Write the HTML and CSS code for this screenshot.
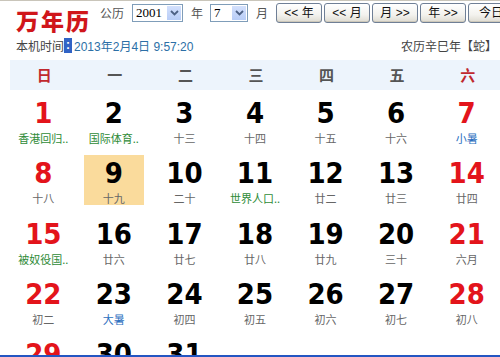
FILE: index.html
```html
<!DOCTYPE html>
<html lang="zh">
<head>
<meta charset="utf-8">
<title>万年历</title>
<link rel="stylesheet" href="styles.css">
</head>
<body>
<div class="page">
  <div class="top">
    <div class="title">万年历</div>
    <div class="controls">
      <span class="lbl lbl-gl">公历</span>
      <span class="sel sel-year"><span class="sel-val">2001</span><span class="sel-btn"><svg width="9" height="6" viewBox="0 0 9 6"><path d="M1 1 L4.5 4.5 L8 1" fill="none" stroke="#4d6185" stroke-width="1.8"/></svg></span></span>
      <span class="lbl lbl-y">年</span>
      <span class="sel sel-month"><span class="sel-val">7</span><span class="sel-btn"><svg width="9" height="6" viewBox="0 0 9 6"><path d="M1 1 L4.5 4.5 L8 1" fill="none" stroke="#4d6185" stroke-width="1.8"/></svg></span></span>
      <span class="lbl lbl-m">月</span>
      <div class="btns">
        <button class="btn">&lt;&lt; 年</button>
        <button class="btn">&lt;&lt; 月</button>
        <button class="btn">月 &gt;&gt;</button>
        <button class="btn">年 &gt;&gt;</button>
        <button class="btn">今日</button>
      </div>
    </div>
  </div>
  <div class="info">
    <div class="now"><span class="now-lbl">本机时间</span><span class="colon">:</span><span class="now-val">2013年2月4日 9:57:20</span></div>
    <div class="lunar-year">农历辛巳年【蛇】</div>
  </div>
  <div class="cal">
    <div class="weekdays">
      <div class="wd red">日</div><div class="wd">一</div><div class="wd">二</div><div class="wd">三</div><div class="wd">四</div><div class="wd">五</div><div class="wd red">六</div>
    </div>
    <div class="days">
      <div class="cell"><div class="box"><div class="num red">1</div><div class="lun fest">香港回归..</div></div></div>
      <div class="cell"><div class="box"><div class="num">2</div><div class="lun fest">国际体育..</div></div></div>
      <div class="cell"><div class="box"><div class="num">3</div><div class="lun">十三</div></div></div>
      <div class="cell"><div class="box"><div class="num">4</div><div class="lun">十四</div></div></div>
      <div class="cell"><div class="box"><div class="num">5</div><div class="lun">十五</div></div></div>
      <div class="cell"><div class="box"><div class="num">6</div><div class="lun">十六</div></div></div>
      <div class="cell"><div class="box"><div class="num red">7</div><div class="lun term">小暑</div></div></div>

      <div class="cell"><div class="box"><div class="num red">8</div><div class="lun">十八</div></div></div>
      <div class="cell"><div class="box today"><div class="num">9</div><div class="lun">十九</div></div></div>
      <div class="cell"><div class="box"><div class="num">10</div><div class="lun">二十</div></div></div>
      <div class="cell"><div class="box"><div class="num">11</div><div class="lun fest">世界人口..</div></div></div>
      <div class="cell"><div class="box"><div class="num">12</div><div class="lun">廿二</div></div></div>
      <div class="cell"><div class="box"><div class="num">13</div><div class="lun">廿三</div></div></div>
      <div class="cell"><div class="box"><div class="num red">14</div><div class="lun">廿四</div></div></div>

      <div class="cell"><div class="box"><div class="num red">15</div><div class="lun fest">被奴役国..</div></div></div>
      <div class="cell"><div class="box"><div class="num">16</div><div class="lun">廿六</div></div></div>
      <div class="cell"><div class="box"><div class="num">17</div><div class="lun">廿七</div></div></div>
      <div class="cell"><div class="box"><div class="num">18</div><div class="lun">廿八</div></div></div>
      <div class="cell"><div class="box"><div class="num">19</div><div class="lun">廿九</div></div></div>
      <div class="cell"><div class="box"><div class="num">20</div><div class="lun">三十</div></div></div>
      <div class="cell"><div class="box"><div class="num red">21</div><div class="lun">六月</div></div></div>

      <div class="cell"><div class="box"><div class="num red">22</div><div class="lun">初二</div></div></div>
      <div class="cell"><div class="box"><div class="num">23</div><div class="lun term">大暑</div></div></div>
      <div class="cell"><div class="box"><div class="num">24</div><div class="lun">初四</div></div></div>
      <div class="cell"><div class="box"><div class="num">25</div><div class="lun">初五</div></div></div>
      <div class="cell"><div class="box"><div class="num">26</div><div class="lun">初六</div></div></div>
      <div class="cell"><div class="box"><div class="num">27</div><div class="lun">初七</div></div></div>
      <div class="cell"><div class="box"><div class="num red">28</div><div class="lun">初八</div></div></div>

      <div class="cell"><div class="box"><div class="num red">29</div><div class="lun">初九</div></div></div>
      <div class="cell"><div class="box"><div class="num">30</div><div class="lun">初十</div></div></div>
      <div class="cell"><div class="box"><div class="num">31</div><div class="lun">十一</div></div></div>
      <div class="cell"></div><div class="cell"></div><div class="cell"></div><div class="cell"></div>
    </div>
  </div>
</div>
</body>
</html>
```

FILE: styles.css
```css
html, body {
  margin: 0;
  padding: 0;
  background: #fff;
  overflow: hidden;
}
body {
  font-family: "Liberation Sans", "Noto Sans CJK SC", sans-serif;
  font-size: 12px;
  color: #333;
}
.page {
  width: 500px;
  height: 357px;
  overflow: hidden;
  box-sizing: border-box;
  border-top: 1px solid #c9c5ba;
  border-bottom: 2px solid #2456c2;
}
.top {
  display: flex;
  align-items: flex-start;
  height: 34px;
  padding-left: 16px;
  white-space: nowrap;
}
.title {
  flex-shrink: 0;
  font-family: "Noto Sans CJK SC", sans-serif;
  font-weight: 900;
  font-size: 23px;
  line-height: 23px;
  color: #d0161b;
  margin-top: 8px;
  letter-spacing: 2px;
}
.controls {
  flex-shrink: 0;
  display: flex;
  align-items: center;
  height: 20px;
  margin-top: 2px;
  margin-left: 9px;
}
.lbl {
  flex-shrink: 0;
  font-family: "Noto Sans CJK SC", sans-serif;
  font-size: 12px;
  color: #555;
  line-height: 20px;
}
.lbl-gl { margin-right: 8px; }
.lbl-y { margin: 0 7px 0 8px; }
.lbl-m { margin: 0 8px 0 8px; }
.sel {
  flex-shrink: 0;
  display: flex;
  align-items: stretch;
  height: 18px;
  box-sizing: border-box;
  border: 1px solid #7f9db9;
  background: #fff;
}
.sel-year { width: 51px; }
.sel-month { width: 38px; }
.sel-val {
  flex: 1;
  font-family: "Liberation Serif", serif;
  font-size: 13px;
  line-height: 16px;
  padding-left: 3px;
  color: #000;
}
.sel-btn {
  width: 14px;
  margin: 1px;
  background: linear-gradient(#d3e0fc, #b8cdf7);
  display: flex;
  align-items: center;
  justify-content: center;
}
.btns {
  flex-shrink: 0;
  display: flex;
  gap: 2px;
}
.btn {
  width: 46px;
  height: 20px;
  padding: 0;
  flex-shrink: 0;
  border: 1px solid #6f7f96;
  border-radius: 3px;
  background: linear-gradient(#ffffff, #f3f2ee 60%, #dedbd1);
  font-family: "Liberation Sans", "Noto Sans CJK SC", sans-serif;
  font-size: 12px;
  line-height: 18px;
  color: #111;
  box-shadow: inset 0 -1px 0 #cdc8ba;
}
.info {
  display: flex;
  justify-content: space-between;
  align-items: center;
  height: 20px;
  padding: 0 3px 0 16px;
  white-space: nowrap;
}
.now { display: flex; align-items: center; }
.now-lbl { color: #444; font-size: 12px; font-family: "Noto Sans CJK SC", sans-serif; }
.colon {
  background: #3163c5;
  color: #fff;
  width: 8px;
  text-align: center;
  font-weight: bold;
  line-height: 15px;
  margin-right: 2px;
}
.now-val { color: #2c6fa6; font-size: 12px; }
.lunar-year { color: #444; font-size: 12px; font-family: "Noto Sans CJK SC", sans-serif; }
.cal {
  margin-top: 5px;
  margin-left: 8px;
  width: 494px;
}
.weekdays {
  display: grid;
  grid-template-columns: repeat(7, 70.57px);
  height: 30px;
  background: #edf4fc;
  margin-left: 2px;
}
.wd {
  font-family: "Noto Sans CJK SC", sans-serif;
  font-weight: bold;
  font-size: 15px;
  line-height: 30px;
  text-align: center;
  color: #555;
  margin-left: -2px;
}
.wd.red { color: #c0282e; }
.days {
  display: grid;
  grid-template-columns: repeat(7, 70.57px);
  grid-auto-rows: 60.3px;
}
.cell {
  padding: 5px 5px;
}
.box {
  height: 50px;
  display: flex;
  flex-direction: column;
  align-items: center;
}
.box.today { background: #fadb9c; }
.num {
  font-family: "DejaVu Sans Condensed", "DejaVu Sans", sans-serif;
  font-stretch: condensed;
  font-weight: bold;
  font-size: 29px;
  line-height: 28px;
  margin-top: 4px;
  color: #000;
}
.num.red { color: #e3141b; }
.lun {
  font-family: "Noto Sans CJK SC", sans-serif;
  font-size: 11px;
  line-height: 14px;
  margin-top: 4px;
  color: #666;
  white-space: nowrap;
}
.lun.fest { color: #2e8b37; }
.lun.term { color: #2c6fc0; }
```
